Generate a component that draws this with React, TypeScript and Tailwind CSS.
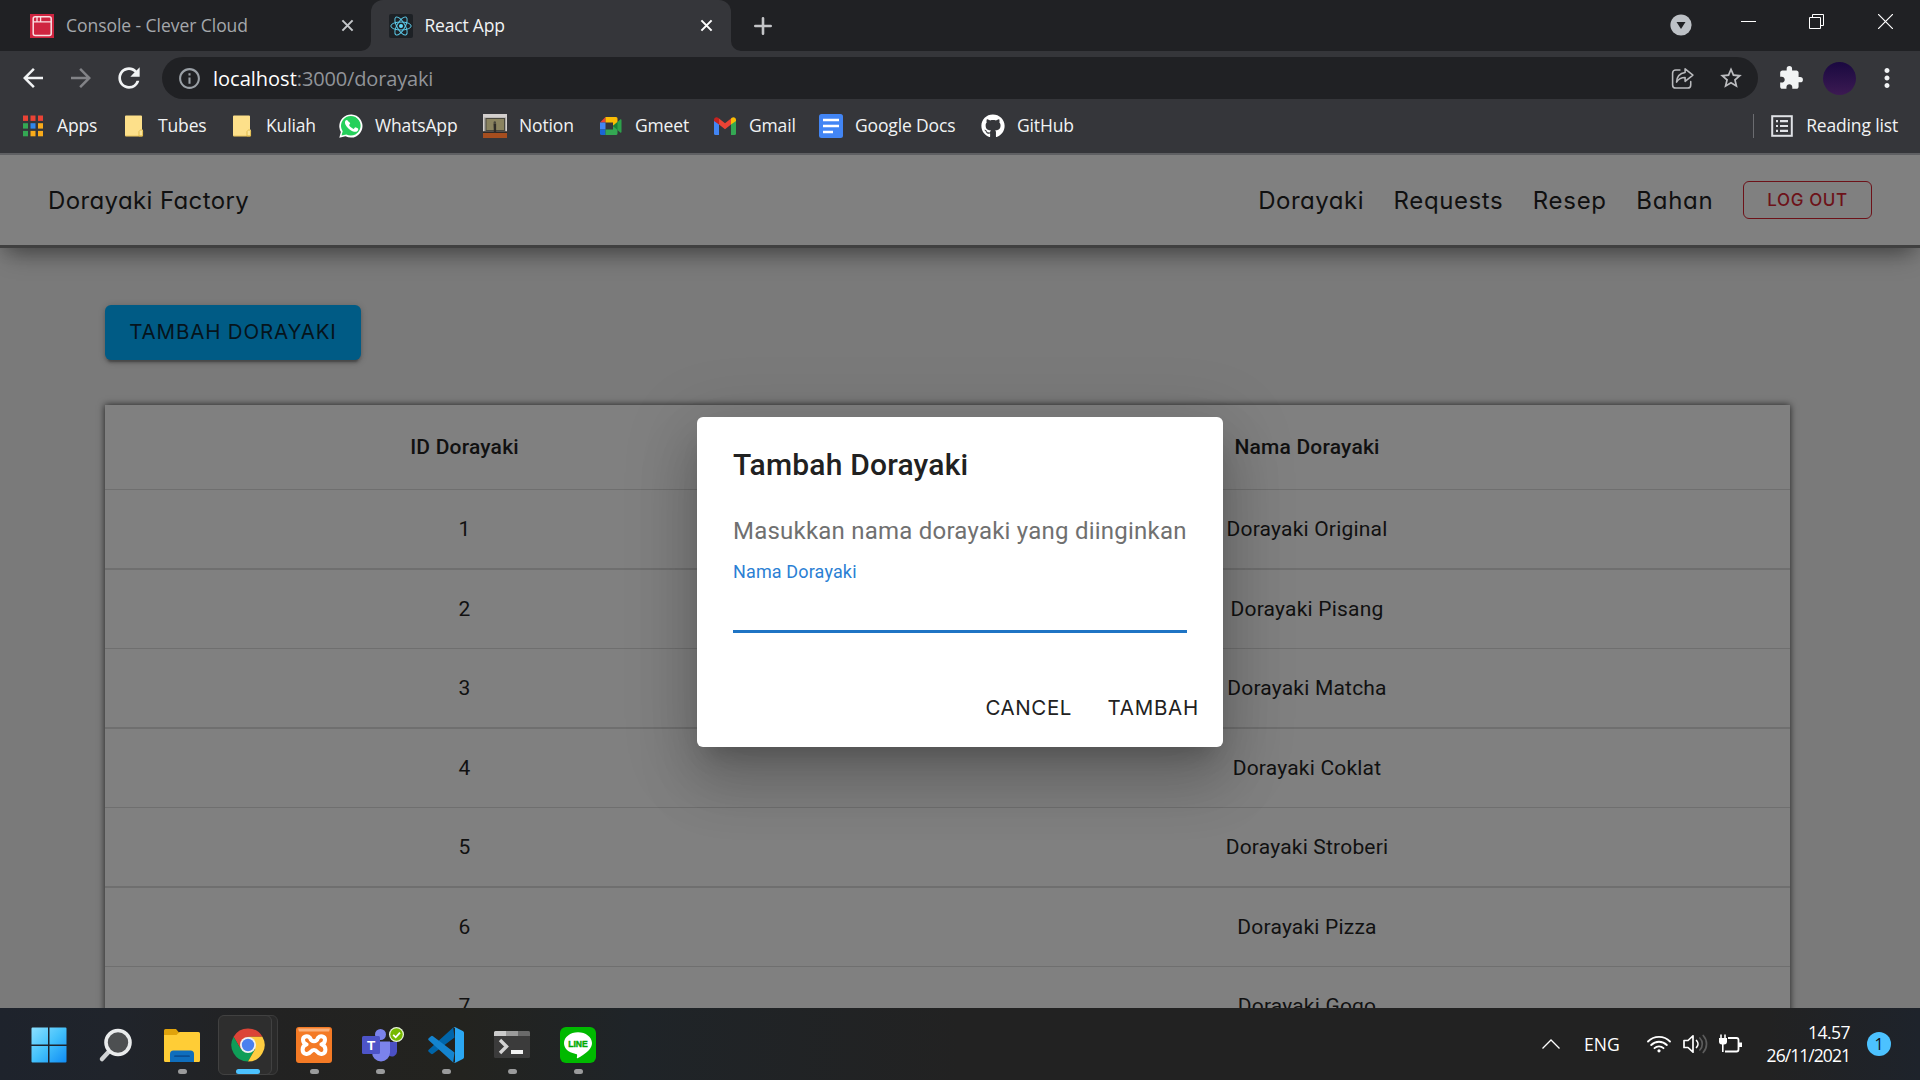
import type { ReactNode } from "react";
import {
  MdArrowBack,
  MdArrowForward,
  MdExtension,
  MdInfoOutline,
  MdMoreVert,
  MdRefresh,
  MdStarBorder,
} from "react-icons/md";
import { FaGithub } from "react-icons/fa";

const rows = [
  "Dorayaki Original",
  "Dorayaki Pisang",
  "Dorayaki Matcha",
  "Dorayaki Coklat",
  "Dorayaki Stroberi",
  "Dorayaki Pizza",
  "Dorayaki Gogo",
];

/* ---------- browser icons ---------- */

function CloseX({ className }: { className: string }) {
  return (
    <svg viewBox="0 0 14 14" className={className} fill="none" stroke="currentColor" strokeWidth="2.2">
      <path d="M1.5 1.5l11 11M12.5 1.5l-11 11" />
    </svg>
  );
}

function CleverIcon() {
  return (
    <svg viewBox="0 0 24 24" className="size-6">
      <rect width="24" height="24" fill="#cf2440" />
      <rect x="3.2" y="2.8" width="18" height="18.6" rx="2" fill="none" stroke="#fbdfe3" strokeWidth="1.5" />
      <path d="M3.2 7.8h18M7 3v4.6M10.6 3v4.6" stroke="#fbdfe3" strokeWidth="1.3" fill="none" />
    </svg>
  );
}

function ReactIcon() {
  return (
    <svg viewBox="0 0 24 24" className="size-6">
      <rect width="24" height="24" rx="2" fill="#1d2125" />
      <g fill="none" stroke="#5ccbea" strokeWidth="1">
        <ellipse cx="12" cy="12" rx="10.2" ry="4" />
        <ellipse cx="12" cy="12" rx="10.2" ry="4" transform="rotate(60 12 12)" />
        <ellipse cx="12" cy="12" rx="10.2" ry="4" transform="rotate(120 12 12)" />
      </g>
      <circle cx="12" cy="12" r="2" fill="#61dafb" />
    </svg>
  );
}

function AppsIcon() {
  const colors = ["#ea4335", "#ea4335", "#ea4335", "#34a853", "#2f86eb", "#f9ab1a", "#34a853", "#f9ab1a", "#f9ab1a"];
  return (
    <svg viewBox="0 0 24 24" className="size-6">
      {colors.map((c, i) => (
        <rect key={i} x={2 + (i % 3) * 7.5} y={1.5 + Math.floor(i / 3) * 7.7} width="5" height="5.4" fill={c} />
      ))}
    </svg>
  );
}

function FolderIcon() {
  return (
    <svg viewBox="0 0 24 24" className="size-6">
      <path d="M3 2.5a1 1 0 011-1h15a1 1 0 011 1V15l1 1.5v4.8a1 1 0 01-1 1H4a1 1 0 01-1-1z" fill="#fde08a" />
      <path d="M17 22V17.5l2-2 1.6 1.6V22z" fill="#fbe59a" stroke="#d8b13e" strokeWidth=".8" />
      <path d="M3.4 22h17" stroke="#e3bd4e" strokeWidth=".8" />
    </svg>
  );
}

function WhatsAppIcon() {
  return (
    <svg viewBox="0 0 24 24" className="size-6">
      <path d="M.3 23.8l1.6-5.9A11.6 11.6 0 1112.200 23.600 11.600 11.600 0 016.500 22.200z" fill="#fff" />
      <path d="M2.500 21.600l1.200-4.300a9.800 9.800 0 113.600 3.200z" fill="#25d05b" />
      <path
        d="M8.600 6.600c-.3-.6-.5-.6-.9-.6-.9 0-2 .9-2 2.700 0 1.700 1.300 3.400 1.500 3.700.2.200 2.500 3.900 6.100 5.300 3 1.200 3.600.9 4.300.9.600-.1 2-.800 2.300-1.700.300-.800.300-1.500.200-1.600-.4-.4-2.900-1.500-3.200-1.500-.4 0-.7.800-1.400 1.600-.3.300-.5.3-.9.1-1.700-.8-3.300-2-4.300-3.800-.4-.6.400-.8 1-2 .1-.2 0-.4 0-.6z"
        transform="translate(.7 .6) scale(.92)"
        fill="#fff"
      />
    </svg>
  );
}

function NotionThumb() {
  return (
    <svg viewBox="0 0 24 24" className="size-6">
      <rect width="24" height="24" fill="#d3cfcd" />
      <path d="M1 3.500h22V19H1z" fill="#a9a7a2" />
      <rect x="3" y="4.500" width="18.500" height="12" fill="#8a835f" stroke="#4a483e" strokeWidth="1" />
      <rect y="17.300" width="24" height="2" fill="#2e2a27" />
      <rect y="19" width="24" height="5" fill="#a64e1f" />
      <path d="M10.500 9.500h2.600v9.500h-2.200z" fill="#2f2c28" />
      <circle cx="11.800" cy="8.500" r="1.200" fill="#4a473d" />
    </svg>
  );
}

function MeetIcon() {
  return (
    <svg viewBox="0 0 24 24" className="size-6">
      <path d="M1 8.500L6.500 3v5.500z" fill="#ea4335" />
      <path d="M6.500 3H17a1.500 1.500 0 011.500 1.500v4L14 12V8.500H6.500z" fill="#fbbc04" />
      <path d="M1 8.500h5.500v7H1z" fill="#4285f4" />
      <path d="M1 15.500h5.500V21H2.500A1.500 1.500 0 011 19.500z" fill="#1a66d6" />
      <path d="M6.500 15.500H14V12l4.500 3v4.500A1.500 1.500 0 0117 21H6.500z" fill="#34a853" />
      <path d="M14 12l7.200-6.600c.5-.4 1.300-.1 1.300.6v12c0 .7-.8 1-1.300.6z" fill="#2da14a" />
      <path d="M14 12l4.500-4v8z" fill="#188038" />
    </svg>
  );
}

function GmailIcon() {
  return (
    <svg viewBox="0 0 24 24" className="size-6">
      <path d="M1 6v13.500A1.500 1.500 0 002.500 21H6V10z" fill="#4285f4" />
      <path d="M23 6v13.500a1.500 1.500 0 01-1.500 1.500H18V10z" fill="#34a853" />
      <path d="M6 4.500l6 4.800 6-4.800v6L12 15.300 6 10.500z" fill="#ea4335" />
      <path d="M1 6c0-2.500 2.500-3.500 4.200-2.200L6 4.500v6L1 7z" fill="#c5221f" />
      <path d="M23 6c0-2.500-2.500-3.500-4.200-2.200L18 4.500v6L23 7z" fill="#fbbc04" />
    </svg>
  );
}

function DocsIcon() {
  return (
    <svg viewBox="0 0 24 24" className="size-6">
      <rect width="24" height="24" rx="2.500" fill="#4285f4" />
      <path d="M4 6h16M4 12h16M4 18h10" stroke="#fff" strokeWidth="2.600" />
    </svg>
  );
}

function ShareIcon() {
  return (
    <svg viewBox="0 0 24 24" className="size-[25px] text-[#b9babd]" fill="none" stroke="currentColor" strokeWidth="1.500" strokeLinejoin="round" strokeLinecap="round">
      <path d="M9.500 3.800H5.500A3 3 0 002.500 6.800v11.400a3 3 0 003 3h11.400a3 3 0 003-3V15" />
      <path d="M14.500 2.700l7.500 6-7.500 6v-3.600c-4 0-6.300 1.300-8.200 4.400.3-5.300 3.200-8.600 8.200-9.200z" />
    </svg>
  );
}

function ReadingListIcon() {
  return (
    <svg viewBox="0 0 22 22" className="size-[22px]">
      <rect x="1.200" y="1.200" width="19.600" height="19.600" fill="none" stroke="#dfe1e5" strokeWidth="2" />
      <path d="M5 6.200h2M5 11h2M5 15.800h2M9 6.200h8M9 11h8M9 15.800h8" stroke="#dfe1e5" strokeWidth="2.200" />
    </svg>
  );
}

/* ---------- browser chrome ---------- */

function TabStrip() {
  return (
    <div className="flex h-[51px] items-center bg-[#202124] text-[17.5px] tracking-[-0.1px]">
      <div className="flex h-full w-[371px] items-center pl-[30px]">
        <CleverIcon />
        <span className="ml-3 w-[275px] tracking-[-0.05px] text-[#a5a8ac]">Console - Clever Cloud</span>
        <CloseX className="size-[13px] text-[#c4c7ca]" />
      </div>
      <div className="relative flex h-full w-[360px] items-center rounded-t-[12px] bg-[#35363a] pl-[18px]">
        <svg viewBox="0 0 10 10" className="absolute bottom-0 -left-[10px] size-[10px]">
          <path d="M10 0v10H0A10 10 0 0010 0z" fill="#35363a" />
        </svg>
        <svg viewBox="0 0 10 10" className="absolute -right-[10px] bottom-0 size-[10px]">
          <path d="M0 0v10h10A10 10 0 010 0z" fill="#35363a" />
        </svg>
        <ReactIcon />
        <span className="ml-[11.5px] w-[275.5px] tracking-[-0.2px] text-[#f1f3f4]">React App</span>
        <CloseX className="size-[13px] text-white" />
      </div>
      <svg viewBox="0 0 18 18" className="ml-[23px] size-[18px]" stroke="#c4c5c8" strokeWidth="2.600" strokeLinecap="round">
        <path d="M9 1.300v15.400M1.300 9h15.400" />
      </svg>
      <div className="ml-auto flex h-full items-start">
        <svg viewBox="0 0 22 22" className="mt-[14px] mr-[49px] size-[22px]">
          <circle cx="11" cy="11" r="10.600" fill="#bdc1c6" />
          <path d="M6.500 8h9L11 15z" fill="#202124" />
        </svg>
        <svg viewBox="0 0 15 15" className="mt-[14px] mr-[53px] size-[15px]">
          <path d="M0 7.500h15" stroke="#fff" />
        </svg>
        <svg viewBox="0 0 15 15" className="mt-[14px] mr-[54px] size-[15px]" fill="none" stroke="#fff">
          <path d="M.5 3.500h11v11H.5zM3.500 3.500v-3h11v11h-3" />
        </svg>
        <svg viewBox="0 0 15 15" className="mt-[14px] mr-[27px] size-[15px]" stroke="#fff" strokeWidth="1.200">
          <path d="M0 0l15 15M15 0L0 15" />
        </svg>
      </div>
    </div>
  );
}

function Toolbar() {
  return (
    <div className="flex h-[54px] items-center pl-[18px]">
      <MdArrowBack className="size-[30px] text-[#f1f3f4]" />
      <MdArrowForward className="ml-[18px] size-[30px] text-[#828387]" />
      <MdRefresh className="ml-[17px] size-[32px] text-[#f1f3f4]" />
      <div className="ml-[17px] flex h-[42px] w-[1596px] items-center rounded-full bg-[#202124] pr-[14px] pl-[15px]">
        <MdInfoOutline className="size-[25px] text-[#9aa0a6]" />
        <span className="mt-px ml-[11px] text-[20px] text-white">localhost</span>
        <span className="mt-px text-[20px] tracking-[-0.15px] text-[#919499]">:3000/dorayaki</span>
        <span className="ml-auto">
          <ShareIcon />
        </span>
        <MdStarBorder className="ml-[23px] size-[26px] text-[#bcbdc0]" />
      </div>
      <MdExtension className="ml-[20px] size-[26px] text-[#f1f3f4]" />
      <div className="ml-[19px] size-[33px] rounded-full bg-linear-to-b from-[#1a0840] to-[#3c1a52]" />
      <MdMoreVert className="ml-[16px] size-[30px] text-[#f1f3f4]" />
    </div>
  );
}

function Bookmark({ icon, label, width }: { icon: ReactNode; label: string; width: string }) {
  return (
    <div className={`flex shrink-0 items-center gap-3 ${width}`}>
      {icon}
      <span className="-mt-0.5 whitespace-nowrap">{label}</span>
    </div>
  );
}

function BookmarksBar() {
  return (
    <div className="flex h-[48px] items-center pb-[6px] pl-[21px] text-[17.5px] tracking-[-0.15px] text-[#f1f3f4]">
      <Bookmark icon={<AppsIcon />} label="Apps" width="w-[101px]" />
      <Bookmark icon={<FolderIcon />} label="Tubes" width="w-[108px]" />
      <Bookmark icon={<FolderIcon />} label="Kuliah" width="w-[109px]" />
      <Bookmark icon={<WhatsAppIcon />} label="WhatsApp" width="w-[144px]" />
      <Bookmark icon={<NotionThumb />} label="Notion" width="w-[116px]" />
      <Bookmark icon={<MeetIcon />} label="Gmeet" width="w-[114px]" />
      <Bookmark icon={<GmailIcon />} label="Gmail" width="w-[106px]" />
      <Bookmark icon={<DocsIcon />} label="Google Docs" width="w-[162px]" />
      <Bookmark icon={<FaGithub className="size-6 text-white" />} label="GitHub" width="w-[140px]" />
      <div className="ml-auto flex items-center pr-[22px]">
        <div className="mr-[17px] h-6 w-px bg-[#6b6c70]" />
        <ReadingListIcon />
        <span className="-mt-0.5 ml-[13px] tracking-[-0.15px]">Reading list</span>
      </div>
    </div>
  );
}

/* ---------- web page ---------- */

function SiteHeader() {
  return (
    <header className="relative flex h-[93px] shrink-0 items-center border-b-[3px] border-[#404040] bg-[#808080] px-12 font-['Inter',sans-serif] text-[24px] text-[#101010] shadow-[0_14px_22px_-8px_rgba(0,0,0,0.38),0_4px_14px_rgba(0,0,0,0.1)] [font-feature-settings:'cv11']">
      <span className="mt-0.5 tracking-[0.38px]">Dorayaki Factory</span>
      <nav className="ml-auto flex items-center gap-[29.5px]">
        <a className="mt-0.5 tracking-[0.52px]">Dorayaki</a>
        <a className="mt-0.5 tracking-[0.6px]">Requests</a>
        <a className="mt-0.5 tracking-[0.7px]">Resep</a>
        <a className="mt-0.5 tracking-[0.75px]">Bahan</a>
        <button className="flex h-[38px] w-[129px] items-center justify-center rounded-[6px] border-[1.5px] border-[#6d1219] pt-0.5 text-[17px] font-medium tracking-[0.6px] text-[#6d1219]">
          LOG OUT
        </button>
      </nav>
    </header>
  );
}

function DorayakiTable() {
  return (
    <div className="mt-[45px] ml-[105px] w-[1685px] bg-[#808080] font-['Roboto',sans-serif] text-[21px] tracking-[0.2px] text-[#111] shadow-[0_0_7px_rgba(0,0,0,0.75)]">
      <div className="grid h-[85px] grid-cols-[719px_966px] items-center border-b border-[#6f6f6f] pt-0.5 text-center font-medium">
        <span>ID Dorayaki</span>
        <span>Nama Dorayaki</span>
      </div>
      {rows.map((name, i) => (
        <div
          key={name}
          className={`grid grid-cols-[719px_966px] items-center border-[#6f6f6f] pt-0.5 text-center ${i % 2 === 0 ? "h-[80px] border-b-2" : "h-[79px] border-b"}`}
        >
          <span>{i + 1}</span>
          <span>{name}</span>
        </div>
      ))}
    </div>
  );
}

function AddDialog() {
  return (
    <div className="absolute top-[262px] left-[697px] flex h-[330px] w-[526px] flex-col rounded-[6px] bg-white pt-[25px] pr-6 pl-9 font-['Roboto',sans-serif] shadow-[0_16.5px_22.5px_-10.5px_rgba(0,0,0,0.2),0_36px_57px_4.5px_rgba(0,0,0,0.14),0_13.5px_69px_12px_rgba(0,0,0,0.12)]">
      <h2 className="text-[30px] leading-[45px] font-medium tracking-[0.2px] text-[#212121]">Tambah Dorayaki</h2>
      <p className="mt-[26px] text-2xl leading-[36px] tracking-[0.23px] whitespace-nowrap text-[#707070]">
        Masukkan nama dorayaki yang diinginkan
      </p>
      <label className="mt-[11px] text-lg leading-[24px] tracking-[0.14px] text-[#2b7fd4]">Nama Dorayaki</label>
      <div className="mr-3 h-[49px] border-b-[3px] border-[#1f74c4]" />
      <div className="mt-[60px] flex justify-end gap-[35.5px] font-['Inter',sans-serif] text-[20.5px] leading-[30px] text-[#212121] [font-feature-settings:'cv11']">
        <button className="tracking-[0.6px]">CANCEL</button>
        <button className="tracking-[0.75px]">TAMBAH</button>
      </div>
    </div>
  );
}

function DorayakiPage() {
  return (
    <main className="relative flex h-[853px] flex-col overflow-hidden bg-[#7a7a7a]">
      <SiteHeader />
      <button className="mt-[57px] ml-[105px] flex h-[55px] w-[256px] shrink-0 items-center justify-center rounded-[6px] bg-[#005b85] font-['Inter',sans-serif] text-[20.5px] tracking-[0.84px] text-[#06141c] shadow-[0_4.5px_1.5px_-3px_rgba(0,0,0,0.2),0_3px_3px_rgba(0,0,0,0.14),0_1.5px_7.5px_rgba(0,0,0,0.2)]">
        TAMBAH DORAYAKI
      </button>
      <DorayakiTable />
      <AddDialog />
    </main>
  );
}

/* ---------- taskbar ---------- */

function StartIcon() {
  return (
    <svg viewBox="0 0 36 36" className="mr-0.5 size-9">
      <defs>
        <linearGradient id="win" x1="0" y1="0" x2="1" y2="1">
          <stop offset="0" stopColor="#8ce0ff" />
          <stop offset=".5" stopColor="#43c1fb" />
          <stop offset="1" stopColor="#0f8cf5" />
        </linearGradient>
      </defs>
      <path d="M1.500.5H17v17H.5v-16a1 1 0 011-1zM18.500.5h16a1 1 0 011 1v16h-17zM.5 19H17v16.500H1.500a1 1 0 01-1-1zM18.500 19h17v15.500a1 1 0 01-1 1h-16z" fill="url(#win)" />
    </svg>
  );
}

function SearchIcon() {
  return (
    <svg viewBox="0 0 36 36" className="size-9">
      <path d="M10.500 25L4 32" stroke="#cfd2d4" strokeWidth="4.500" strokeLinecap="round" />
      <circle cx="20" cy="15.500" r="12" fill="#4d4f51" stroke="#e9ebec" strokeWidth="3.600" />
    </svg>
  );
}

function ExplorerIcon() {
  return (
    <svg viewBox="0 0 36 36" className="size-9">
      <path d="M0 3.500A1.500 1.500 0 011.500 2H12l3 3.500V12H0z" fill="#e0a30c" />
      <path d="M0 8h12.500l3-3H34.500A1.500 1.500 0 0136 6.500v27a1.500 1.500 0 01-1.500 1.500h-33A1.500 1.500 0 010 33.500z" fill="#ffcd36" />
      <path d="M6 35V27a3.500 3.500 0 013.500-3.500h17A3.500 3.500 0 0130 27v8z" fill="#0f6ebd" />
      <path d="M11 29.200h14" stroke="#0a4f94" strokeWidth="1.800" strokeLinecap="round" />
    </svg>
  );
}

function ChromeIcon() {
  return (
    <svg viewBox="0 0 36 36" className="size-9">
      <path d="M18 1.400a16.600 16.600 0 0114.400 8.300H18L10.800 22.200 3.600 9.700A16.600 16.600 0 0118 1.400z" fill="#db4437" />
      <path d="M3.600 9.700A16.600 16.600 0 0018 34.600l7.200-12.500H10.800z" fill="#0f9d58" />
      <path d="M32.400 9.700A16.600 16.600 0 0118 34.600l7.200-12.500L18 9.700z" fill="#ffcd40" />
      <circle cx="18" cy="18" r="8" fill="#f1f1f1" />
      <circle cx="18" cy="18" r="6.200" fill="#4a80ee" />
    </svg>
  );
}

function XamppIcon() {
  return (
    <svg viewBox="0 0 36 36" className="size-9">
      <rect width="36" height="36" rx="3" fill="#f47a25" />
      <path d="M2 1.500h32l-1 3H3z" fill="#fbb27c" />
      <path
        d="M14 10.800c-2.400-2.600-7-1.600-7 2 0 2.800 1.600 4 3.600 4.600-2.600.8-4 2.400-4 5 0 5 5.400 6 8.200 2.400.8-1.200 1.600-1.800 3.200-1.800s2.400.6 3.200 1.800c2.800 3.600 8.200 2.600 8.200-2.400 0-2.600-1.400-4.200-4-5 2-.6 3.600-1.800 3.600-4.600 0-3.600-4.600-4.600-7-2-.8 2.400-2 3.400-4 3.400s-3.200-1-4-3.400z"
        fill="none"
        stroke="#fff"
        strokeWidth="4"
        strokeLinejoin="round"
      />
    </svg>
  );
}

function TeamsIcon() {
  return (
    <svg viewBox="0 0 42 36" className="ml-[6px] h-9 w-[42px]">
      <path d="M27 15h8v9.500a5 5 0 01-8 4z" fill="#4b50c5" />
      <circle cx="18.500" cy="7.500" r="5.500" fill="#7b83eb" />
      <path d="M10 14.500h18v11a9 9 0 01-18 0z" fill="#7b83eb" />
      <rect y="9" width="18" height="18" rx="1.500" fill="#4d54c8" />
      <text x="9" y="22.500" fontFamily="Liberation Sans" fontWeight="700" fontSize="13.500" textAnchor="middle" fill="#fff">
        T
      </text>
      <circle cx="34.500" cy="7.500" r="7.500" fill="#e9f5d8" />
      <circle cx="34.500" cy="7.500" r="6.200" fill="#76b900" />
      <path d="M31.200 7.800l2.500 2.500 4.300-4.600" fill="none" stroke="#fff" strokeWidth="1.800" />
    </svg>
  );
}

function VsCodeIcon() {
  return (
    <svg viewBox="0 0 36 36" className="size-9">
      <path d="M26.500 10.500L5 26.800a1.500 1.500 0 01-2 0L.7 24.700a1.400 1.400 0 010-2L25.200.6z" fill="#0065a9" />
      <path d="M26.500 25.500L5 9.200a1.500 1.500 0 00-2 0L.7 11.300a1.400 1.400 0 000 2L25.200 35.400z" fill="#1484cf" />
      <path d="M26.600 35.800a2 2 0 01-1.500-.5c.7.600 1.900.1 1.900-.9V1.600c0-1-1.200-1.500-1.900-.9A2 2 0 0127.400.3l7.400 3.600A2 2 0 0136 5.700v24.600a2 2 0 01-1.200 1.800l-7.400 3.600z" fill="#2ba7f3" />
    </svg>
  );
}

function TerminalIcon() {
  return (
    <svg viewBox="0 0 36 36" className="size-9">
      <rect y="4" width="36" height="27" rx="1.500" fill="#3b3b3b" />
      <path d="M0 9V5.500A1.500 1.500 0 011.500 4H12v5z" fill="#cbcbcb" />
      <path d="M12 4h12v5H12z" fill="#9b9b9b" />
      <path d="M24 4h10.500A1.500 1.500 0 0136 5.500V9H24z" fill="#6a6a6a" />
      <path d="M6 13l6.500 6.500L6 26" fill="none" stroke="#d4d4d4" strokeWidth="3.400" />
      <path d="M17 25h12" stroke="#f2f2f2" strokeWidth="4" />
    </svg>
  );
}

function LineIcon() {
  return (
    <svg viewBox="0 0 36 36" className="size-9">
      <rect width="36" height="36" rx="6" fill="#00b900" />
      <path d="M18 5.200c7.700 0 14 4.800 14 10.900 0 2.500-1 4.700-3 6.900-2.900 3.300-9.400 7.400-10.900 8-1.500.6-1.300-.4-1.200-.8l.2-1.200c0-.4.1-1-.1-1.400-.3-.5-1.200-.7-1.900-.9C8.400 25.800 4 21.400 4 16.100 4 10 10.300 5.200 18 5.200z" fill="#fff" />
      <text x="18" y="19.600" fontFamily="Liberation Sans" fontWeight="700" fontSize="8.600" textAnchor="middle" fill="#00a900" stroke="#00a900" strokeWidth=".4">
        LINE
      </text>
    </svg>
  );
}

function TaskItem({ icon, state }: { icon: ReactNode; state: "none" | "open" | "active" }) {
  return (
    <div className="relative flex h-full w-[66px] items-center justify-center">
      {state === "active" && (
        <>
          <div className="absolute top-[7px] left-[10px] h-[60px] w-[53px] rounded-[6px] border border-[#3c3c3c] bg-[#2a2a2a]" />
          <div className="absolute top-[7px] left-[3px] h-[60px] w-[54px] rounded-[6px] border border-[#414141] bg-[#2e2e2e]" />
        </>
      )}
      <div className="relative mt-0.5">{icon}</div>
      {state === "open" && <div className="absolute bottom-[6px] h-[5px] w-[9px] rounded-full bg-[#9a9b9c]" />}
      {state === "active" && <div className="absolute bottom-[6px] left-[21px] h-[5px] w-6 rounded-full bg-[#4cc2ff]" />}
    </div>
  );
}

function Tray() {
  return (
    <div className="ml-auto flex h-full items-center pr-[29px] text-white">
      <svg viewBox="0 0 18 10" className="h-[10px] w-[18px]" fill="none" stroke="#fff" strokeWidth="1.300">
        <path d="M.5 9.500L9 1l8.500 8.500" />
      </svg>
      <span className="mt-px ml-[24px] w-[36px] text-[17.5px]">ENG</span>
      <svg viewBox="0 0 24 18" className="ml-[27px] h-[18px] w-6" fill="none" stroke="#fff" strokeWidth="1.800" strokeLinecap="round">
        <path d="M1 6.500a15.500 15.500 0 0122 0M4.200 10a11 11 0 0115.600 0M7.500 13.200a6.400 6.400 0 019 0" />
        <circle cx="12" cy="15.800" r="1.600" fill="#fff" stroke="none" />
      </svg>
      <svg viewBox="0 0 25 20" className="ml-3 h-5 w-[25px]" fill="none" strokeWidth="1.700" strokeLinecap="round">
        <path d="M1 6.500h4L10 1.800v16.400L5 13.500H1z" stroke="#fff" strokeLinejoin="round" />
        <path d="M13.500 6.500a5 5 0 010 7" stroke="#fff" />
        <path d="M16.800 4a8.500 8.500 0 010 12M20.200 1.500a12.500 12.500 0 010 17" stroke="#5c5c5c" />
      </svg>
      <svg viewBox="0 0 25 20" className="ml-[10px] h-5 w-[25px]" fill="none" stroke="#fff" strokeWidth="1.800">
        <path d="M10 4h8.500a2 2 0 012 2v9.500a2 2 0 01-2 2H7" />
        <path d="M22.500 8.500v4.500" strokeWidth="3" />
        <path d="M1 4h8v3.500a3 3 0 01-3 3H4a3 3 0 01-3-3z" fill="#fff" stroke="none" />
        <path d="M3 4V.5M7 4V.5M4.800 10v8" strokeWidth="1.600" />
      </svg>
      <div className="ml-[21px] w-[87px] pr-px text-right text-[17.5px] leading-[23px] tracking-[-0.95px]">
        <div className="tracking-[-0.5px]">14.57</div>
        <div>26/11/2021</div>
      </div>
      <div className="ml-[16px] flex size-6 items-center justify-center rounded-full bg-[#4cc2ff] text-[16px] text-[#101010]">1</div>
    </div>
  );
}

function Taskbar() {
  return (
    <footer className="flex h-[72px] items-center bg-[linear-gradient(90deg,#1e232c_0%,#20242b_6%,#222_14%,#23231f_24%,#1f2428_33%,#222_50%,#222_92%,#1e232b_100%)] pl-[17px]">
      <TaskItem icon={<StartIcon />} state="none" />
      <TaskItem icon={<SearchIcon />} state="none" />
      <TaskItem icon={<ExplorerIcon />} state="open" />
      <TaskItem icon={<ChromeIcon />} state="active" />
      <TaskItem icon={<XamppIcon />} state="open" />
      <TaskItem icon={<TeamsIcon />} state="open" />
      <TaskItem icon={<VsCodeIcon />} state="open" />
      <TaskItem icon={<TerminalIcon />} state="open" />
      <TaskItem icon={<LineIcon />} state="open" />
      <Tray />
    </footer>
  );
}

export default function App() {
  return (
    <div className="h-[1080px] w-[1920px] overflow-hidden font-['Open_Sans',sans-serif]">
      <div className="h-[155px] border-b-2 border-[#5f6063] bg-[#35363a]">
        <TabStrip />
        <Toolbar />
        <BookmarksBar />
      </div>
      <DorayakiPage />
      <Taskbar />
    </div>
  );
}
